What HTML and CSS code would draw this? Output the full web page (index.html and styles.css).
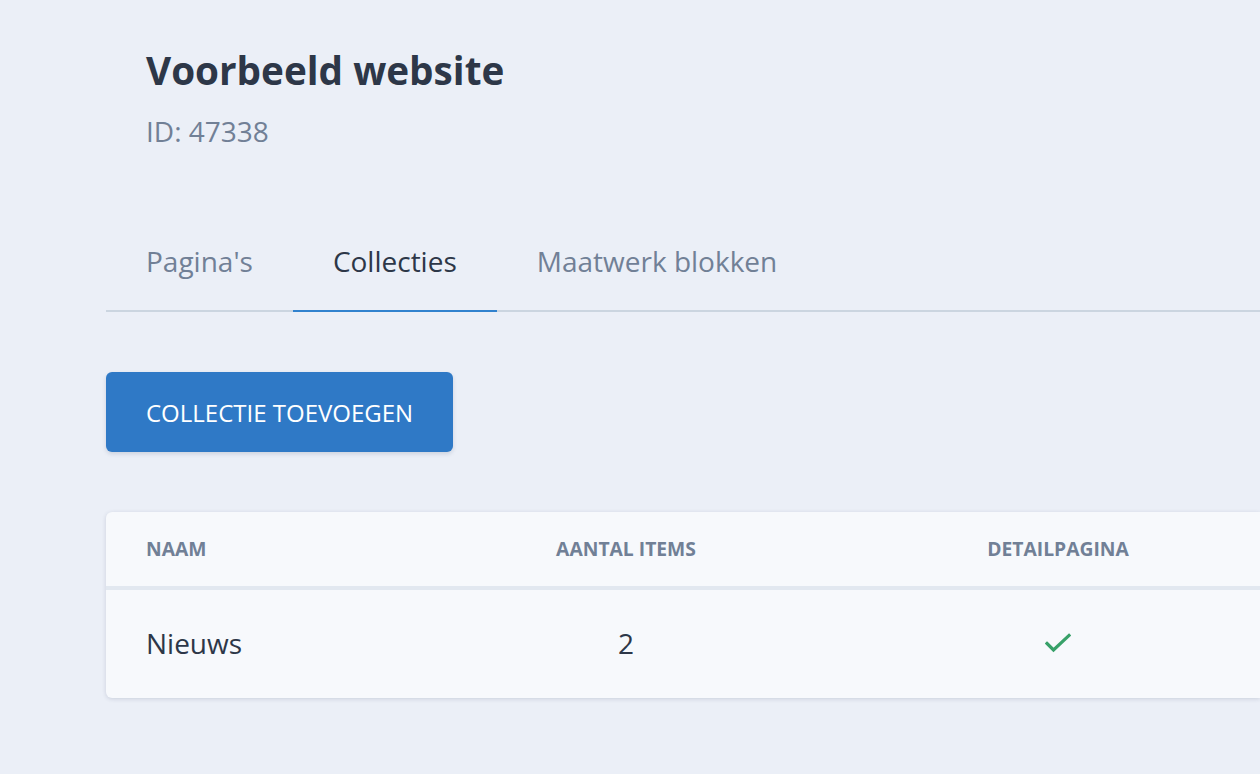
FILE: index.html
```html
<!DOCTYPE html>
<html lang="nl">
<head>
<meta charset="utf-8">
<title>Voorbeeld website</title>
<link rel="stylesheet" href="styles.css">
</head>
<body>
<main class="page">
  <header class="site-head">
    <h1 class="title">Voorbeeld website</h1>
    <p class="site-id">ID: 47338</p>
  </header>

  <nav class="tabs">
    <a class="tab">Pagina's</a>
    <a class="tab tab-active">Collecties</a>
    <a class="tab">Maatwerk blokken</a>
  </nav>

  <div class="actions">
    <button class="btn-primary">COLLECTIE TOEVOEGEN</button>
  </div>

  <section class="table-card">
    <div class="row row-head">
      <div class="cell cell-left">NAAM</div>
      <div class="cell cell-center">AANTAL ITEMS</div>
      <div class="cell cell-center">DETAILPAGINA</div>
    </div>
    <div class="row row-body">
      <div class="cell cell-left">Nieuws</div>
      <div class="cell cell-center">2</div>
      <div class="cell cell-center">
        <svg class="check" width="26" height="20" viewBox="0 0 26 20" aria-hidden="true">
          <path d="M2 10.5 L8.5 17 L24 2.5" fill="none" stroke="#38a169" stroke-width="3.2" stroke-linecap="square" stroke-linejoin="miter"/>
        </svg>
      </div>
    </div>
  </section>
</main>
</body>
</html>
```

FILE: styles.css
```css
html, body {
  margin: 0;
  padding: 0;
  background: #ebeff7;
  overflow: hidden;
}

body {
  font-family: "Open Sans", "Noto Sans", sans-serif;
  color: #2d3748;
}

.page {
  width: 100%;
  padding: 46px 0 60px 106px;
  box-sizing: border-box;
}

.site-head {
  padding: 0 40px;
}

.title {
  margin: 0;
  font-size: 38.7px;
  line-height: 48px;
  font-weight: 700;
  color: #2d3748;
}

.site-id {
  margin: 19px 0 0;
  font-size: 28px;
  line-height: 36px;
  color: #718096;
}

.tabs {
  display: flex;
  margin-top: 94px;
  border-bottom: 2px solid #cbd5e0;
}

.tab {
  display: block;
  padding: 0 40px 31px;
  font-size: 28px;
  line-height: 36px;
  color: #718096;
  border-bottom: 2px solid transparent;
  margin-bottom: -2px;
}

.tab-active {
  color: #2d3748;
  border-bottom-color: #3182ce;
}

.actions {
  margin-top: 60px;
  display: flex;
}

.btn-primary {
  height: 80px;
  padding: 0 40px;
  border: 0;
  border-radius: 6px;
  background: #2f79c6;
  color: #ffffff;
  font-family: "Open Sans", "Noto Sans", sans-serif;
  font-size: 24px;
  font-weight: 400;
  box-shadow: 0 2px 4px rgba(30, 50, 90, 0.15);
}

.table-card {
  margin-top: 60px;
  background: #f7f9fc;
  border-radius: 6px 0 0 6px;
  box-shadow: 0 1px 4px rgba(30, 45, 80, 0.16);
  overflow: hidden;
}

.row {
  display: grid;
  grid-template-columns: 380px 280px 584px;
  align-items: center;
}

.row-head {
  height: 74px;
  border-bottom: 4px solid #e2e8f0;
  font-size: 19.3px;
  font-weight: 700;
  color: #718096;
}

.row-head .cell {
  margin-top: -2px;
}

.row-body {
  height: 108px;
  font-size: 28px;
  color: #2d3748;
}

.cell-left {
  padding-left: 40px;
}

.cell-center {
  text-align: center;
}

.row-body .cell {
  margin-top: -3px;
}

.check {
  display: block;
  margin: 0 auto;
}
```
